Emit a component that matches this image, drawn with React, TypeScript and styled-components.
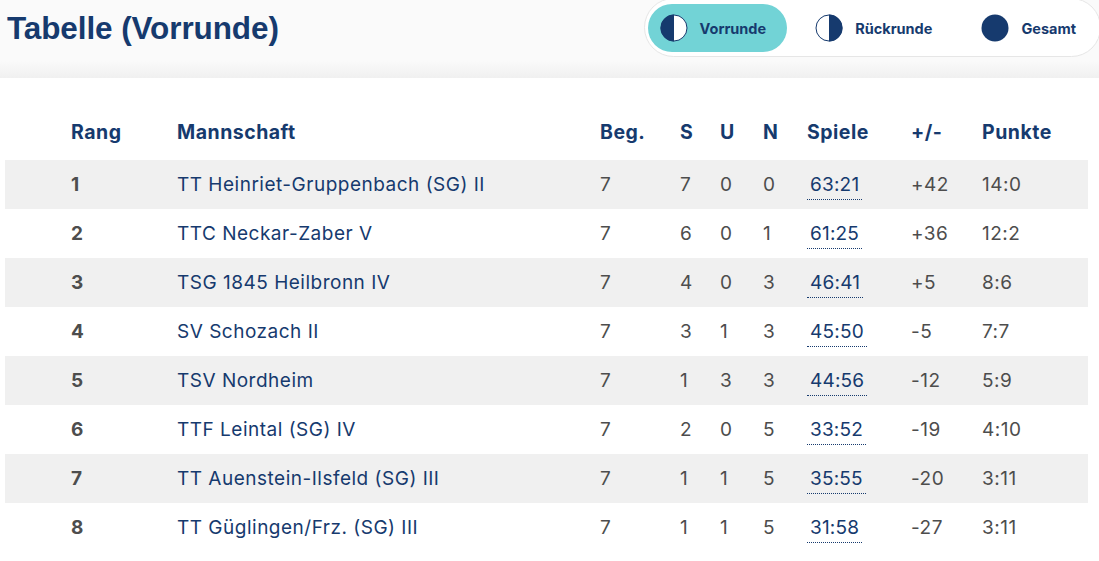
import styled, { createGlobalStyle } from "styled-components";

type Team = {
  rank: number;
  name: string;
  played: number;
  won: number;
  drawn: number;
  lost: number;
  games: string;
  diff: string;
  points: string;
};

const teams: Team[] = [
  { rank: 1, name: "TT Heinriet-Gruppenbach (SG) II", played: 7, won: 7, drawn: 0, lost: 0, games: "63:21", diff: "+42", points: "14:0" },
  { rank: 2, name: "TTC Neckar-Zaber V", played: 7, won: 6, drawn: 0, lost: 1, games: "61:25", diff: "+36", points: "12:2" },
  { rank: 3, name: "TSG 1845 Heilbronn IV", played: 7, won: 4, drawn: 0, lost: 3, games: "46:41", diff: "+5", points: "8:6" },
  { rank: 4, name: "SV Schozach II", played: 7, won: 3, drawn: 1, lost: 3, games: "45:50", diff: "-5", points: "7:7" },
  { rank: 5, name: "TSV Nordheim", played: 7, won: 1, drawn: 3, lost: 3, games: "44:56", diff: "-12", points: "5:9" },
  { rank: 6, name: "TTF Leintal (SG) IV", played: 7, won: 2, drawn: 0, lost: 5, games: "33:52", diff: "-19", points: "4:10" },
  { rank: 7, name: "TT Auenstein-Ilsfeld (SG) III", played: 7, won: 1, drawn: 1, lost: 5, games: "35:55", diff: "-20", points: "3:11" },
  { rank: 8, name: "TT Güglingen/Frz. (SG) III", played: 7, won: 1, drawn: 1, lost: 5, games: "31:58", diff: "-27", points: "3:11" },
];

const NAVY = "#163a6e";
const GREY = "#4d4d4d";

const GlobalStyle = createGlobalStyle`
  html, body {
    margin: 0;
    padding: 0;
    background: #ffffff;
    overflow: hidden;
  }
  body {
    font-family: Inter, "Noto Sans", sans-serif;
  }
  * {
    box-sizing: border-box;
  }
`;

const Page = styled.div`
  width: 1099px;
  height: 561px;
  overflow: hidden;
`;

const HeaderBar = styled.header`
  height: 78px;
  display: flex;
  justify-content: space-between;
  align-items: flex-start;
  background: linear-gradient(to bottom, #fafafa 0%, #fafafa 78%, #f0f0f0 100%);
`;

const Title = styled.h1`
  margin: 8px 0 0 7px;
  font-family: "Liberation Sans", Arial, sans-serif;
  font-size: 31.5px;
  line-height: 40px;
  font-weight: 700;
  color: ${NAVY};
  letter-spacing: -0.1px;
`;

const Toggle = styled.div`
  display: flex;
  align-items: center;
  gap: 16px;
  margin-top: -2px;
  margin-right: -2px;
  padding: 5px 3px 4px 3px;
  background: #ffffff;
  border: 1px solid #e6e6e6;
  border-radius: 30px;
`;

const ToggleButton = styled.button<{ $active?: boolean }>`
  display: flex;
  align-items: center;
  gap: 12px;
  height: 48px;
  padding: 0 21px 0 12px;
  border: none;
  border-radius: 24px;
  background: ${(p) => (p.$active ? "#72d3d6" : "transparent")};
  color: ${NAVY};
  font-family: Inter, sans-serif;
  font-size: 14.5px;
  font-weight: 700;
  cursor: pointer;
`;

const TableWrap = styled.div`
  padding: 32px 11px 0 5px;
`;

const Row = styled.div<{ $striped?: boolean; $head?: boolean }>`
  display: grid;
  grid-template-columns: 106px 423px 80px 40px 43px 44px 104px 71px 1fr;
  align-items: center;
  height: ${(p) => (p.$head ? "50px" : "49px")};
  padding-left: 66px;
  padding-bottom: ${(p) => (p.$head ? "6px" : "0")};
  background: ${(p) => (p.$striped ? "#f0f0f0" : "transparent")};
`;

const HeadCell = styled.div`
  font-size: 19.5px;
  font-weight: 700;
  letter-spacing: 0.5px;
  color: ${NAVY};
`;

const Cell = styled.div<{ $tone?: "navy" | "grey"; $bold?: boolean }>`
  font-size: 19px;
  letter-spacing: 0.5px;
  font-weight: ${(p) => (p.$bold ? 700 : 400)};
  color: ${(p) => (p.$tone === "navy" ? NAVY : GREY)};
`;

const Games = styled.span`
  display: inline-block;
  padding: 5px 3px 3px 3px;
  color: ${NAVY};
  border-bottom: 1.5px dotted ${NAVY};
  line-height: 22px;
  letter-spacing: 0.2px;
`;

type HalfProps = { kind: "first" | "second" | "full" };

const RoundIcon = ({ kind }: HalfProps) => (
  <svg width="28" height="28" viewBox="0 0 28 28">
    {kind === "full" ? (
      <circle cx="14" cy="14" r="13.5" fill={NAVY} />
    ) : (
      <>
        <circle cx="14" cy="14" r="13" fill="#ffffff" stroke={NAVY} strokeWidth="1" />
        <path
          d={kind === "first" ? "M14 0.5 A13.5 13.5 0 0 0 14 27.5 Z" : "M14 0.5 A13.5 13.5 0 0 1 14 27.5 Z"}
          fill={NAVY}
        />
      </>
    )}
  </svg>
);

const headers = ["Rang", "Mannschaft", "Beg.", "S", "U", "N", "Spiele", "+/-", "Punkte"];

export default function App() {
  return (
    <Page>
      <GlobalStyle />
      <HeaderBar>
        <Title>Tabelle (Vorrunde)</Title>
        <Toggle>
          <ToggleButton $active>
            <RoundIcon kind="first" />
            Vorrunde
          </ToggleButton>
          <ToggleButton>
            <RoundIcon kind="second" />
            Rückrunde
          </ToggleButton>
          <ToggleButton>
            <RoundIcon kind="full" />
            Gesamt
          </ToggleButton>
        </Toggle>
      </HeaderBar>
      <TableWrap>
        <Row $head>
          {headers.map((h) => (
            <HeadCell key={h}>{h}</HeadCell>
          ))}
        </Row>
        {teams.map((t, i) => (
          <Row key={t.rank} $striped={i % 2 === 0}>
            <Cell $bold>{t.rank}</Cell>
            <Cell $tone="navy">{t.name}</Cell>
            <Cell>{t.played}</Cell>
            <Cell>{t.won}</Cell>
            <Cell>{t.drawn}</Cell>
            <Cell>{t.lost}</Cell>
            <Cell>
              <Games>{t.games}</Games>
            </Cell>
            <Cell>{t.diff}</Cell>
            <Cell>{t.points}</Cell>
          </Row>
        ))}
      </TableWrap>
    </Page>
  );
}
